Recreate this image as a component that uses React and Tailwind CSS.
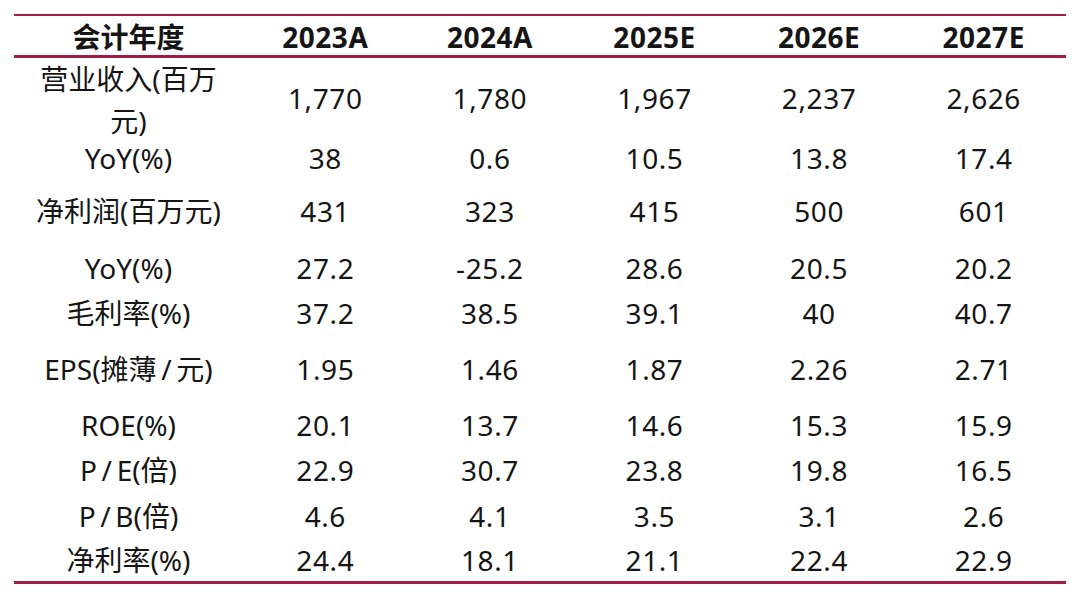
import React from "react";

const cols = ["2023A", "2024A", "2025E", "2026E", "2027E"];
const rows = [
  { label: <>营业收入(百万<br />元)</>, v: ["1,770", "1,780", "1,967", "2,237", "2,626"], h: "h-[79px]", vp: "pb-[5px]" },
  { label: "YoY(%)", v: ["38", "0.6", "10.5", "13.8", "17.4"], h: "h-[40px]", vp: "" },
  { label: "净利润(百万元)", v: ["431", "323", "415", "500", "601"], h: "h-[68px]", vp: "" },
  { label: "YoY(%)", v: ["27.2", "-25.2", "28.6", "20.5", "20.2"], h: "h-[46px]", vp: "" },
  { label: "毛利率(%)", v: ["37.2", "38.5", "39.1", "40", "40.7"], h: "h-[44px]", vp: "" },
  { label: "EPS(摊薄\u2009/\u2009元)", v: ["1.95", "1.46", "1.87", "2.26", "2.71"], h: "h-[68px]", vp: "" },
  { label: "ROE(%)", v: ["20.1", "13.7", "14.6", "15.3", "15.9"], h: "h-[44px]", vp: "" },
  { label: "P\u2009/\u2009E(倍)", v: ["22.9", "30.7", "23.8", "19.8", "16.5"], h: "h-[46px]", vp: "" },
  { label: "P\u2009/\u2009B(倍)", v: ["4.6", "4.1", "3.5", "3.1", "2.6"], h: "h-[46px]", vp: "" },
  { label: "净利率(%)", v: ["24.4", "18.1", "21.1", "22.4", "22.9"], h: "h-[42px]", vp: "" },
];

export default function App() {
  return (
    <div
      className="w-[1080px] h-[598px] bg-white overflow-hidden pt-[14px] text-[#151515]"
      style={{ fontFamily: '"Noto Sans", "Noto Sans CJK SC", sans-serif' }}
    >
      <div className="ml-[14px] w-[1052px] border-t-2 border-[#a11d43]">
        <div className="grid grid-cols-[229px_repeat(5,1fr)] h-[42px] items-center border-b-[3px] border-[#a11d43] font-bold text-[28px] leading-[40px] pt-[1px]">
          <div className="text-center">会计年度</div>
          {cols.map((c) => (
            <div key={c} className="text-center tracking-[0.5px]">{c}</div>
          ))}
        </div>
        {rows.map((r, i) => (
          <div
            key={i}
            className={`grid grid-cols-[229px_repeat(5,1fr)] items-center text-[28px] leading-[42px] ${r.h}`}
          >
            <div className="text-center">{r.label}</div>
            {r.v.map((v, j) => (
              <div key={j} className={`text-center tracking-[0.6px] ${r.vp}`}>{v}</div>
            ))}
          </div>
        ))}
        <div className="border-t-[3px] border-[#a11d43]" />
      </div>
    </div>
  );
}
